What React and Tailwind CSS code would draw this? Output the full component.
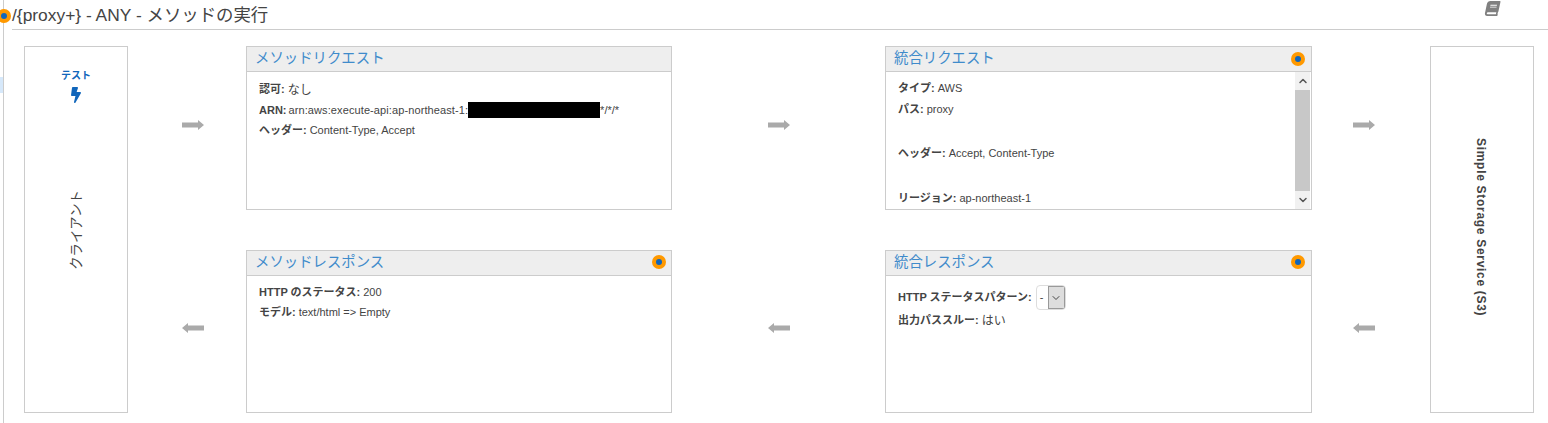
import React from 'react';
import { FaBolt, FaBook } from 'react-icons/fa';
import { ChevronDown, ChevronUp } from 'lucide-react';

const Dot = ({ className = '' }) => (
  <span className={`flex h-[14px] w-[14px] items-center justify-center rounded-full bg-[#f90] ${className}`}>
    <span className="h-[6px] w-[6px] rounded-full bg-[#1166bb]" />
  </span>
);

const Arrow = ({ left, className = '' }) => (
  <div className={`flex items-center justify-center ${className}`}>
    <svg width="22" height="10" viewBox="0 0 22 10" className={left ? 'rotate-180' : ''}>
      <path d="M0 2.5h16V0l6 5-6 5V7.5H0z" fill="#aaaaaa" />
    </svg>
  </div>
);

const Card = ({ title, dot, dotClass = '', children }) => (
  <div className="flex min-h-0 flex-col border border-[#ccc] bg-white">
    <div className="flex h-[25px] shrink-0 items-center justify-between border-b border-[#ccc] bg-[#eee] pl-[8px] pr-[6px]">
      <span className="text-[14.4px] text-[#3f8bcb]">{title}</span>
      {dot && <Dot className={dotClass} />}
    </div>
    {children}
  </div>
);

const Row = ({ label, children, className = 'mb-[7.5px]' }) => (
  <div className={`flex h-[13px] items-center whitespace-nowrap text-[#444] ${className}`}>
    <b className="mr-[3px] font-bold">{label}</b>
    {children}
  </div>
);

const App = () => {
  return (
    <div className="relative h-[423px] w-[1548px] overflow-hidden bg-white font-['Liberation_Sans','Noto_Sans_CJK_JP',sans-serif] text-[11px]">
      {/* left rail */}
      <div className="absolute left-0 top-0 h-full w-[4px] border-r border-[#ccc]">
        <div className="mt-[77px] h-[16px] w-[3px] bg-[#d6e8fa]" />
      </div>
      <Dot className="absolute left-[-3px] top-[9px]" />

      <div className="ml-[12px] flex h-[30px] items-center justify-between border-b border-[#ccc] pt-[2px]">
        <h1 className="text-[17.4px] leading-none text-[#444]">/&#123;proxy+&#125; - ANY - メソッドの実行</h1>
        <FaBook className="mb-[14px] mr-[47px] h-[15px] w-[17px] -skew-x-12 text-[#808080]" />
      </div>

      <div className="ml-[24px] mt-[16px] grid grid-cols-[104px_118px_426px_213px_427px_118px_104px] grid-rows-[164px_40px_163px]">
        <div className="row-span-3 flex flex-col items-center border border-[#ccc] pt-[22px]">
          <span className="text-[10px] font-bold leading-[14px] text-[#1166bb]">テスト</span>
          <FaBolt className="mt-[2px] h-[20px] w-[10px] text-[#1166bb]" />
          <span className="ml-[2px] mt-[85px] rotate-180 text-[13.4px] leading-none text-[#444] [text-orientation:sideways] [writing-mode:vertical-rl]">クライアント</span>
        </div>

        <Arrow className="pb-[6px] pl-[12px]" />

        <Card title="メソッドリクエスト">
          <div className="pl-[12px] pt-[11px]">
            <Row label="認可:"><span className="text-[12px]">なし</span></Row>
            <Row label="ARN:">
              <span className="-ml-[1px] tracking-[0.1px]">arn:aws:execute-api:ap-northeast-1:</span>
              <span className="relative z-10 h-[16px] w-[132px] bg-black" />
              <span>*/*/*</span>
            </Row>
            <Row label="ヘッダー:">Content-Type, Accept</Row>
          </div>
        </Card>

        <Arrow className="pb-[6px]" />

        <Card title="統合リクエスト" dot>
          <div className="flex min-h-0 flex-1">
            <div className="flex-1 overflow-hidden pl-[12px] pt-[10px]">
              <Row label="タイプ:">AWS</Row>
              <Row label="パス:" className="mb-[31px]">proxy</Row>
              <Row label="ヘッダー:" className="mb-[32px]">Accept, Content-Type</Row>
              <Row label="リージョン:">ap-northeast-1</Row>
            </div>
            <div className="mr-[1px] flex w-[15px] flex-col items-center bg-[#f1f1f1]">
              <ChevronUp className="h-[18px] w-[12px] text-[#555]" strokeWidth={3} />
              <div className="h-[101px] w-full bg-[#c8c8c8]" />
              <ChevronDown className="mt-auto h-[18px] w-[12px] text-[#555]" strokeWidth={3} />
            </div>
          </div>
        </Card>

        <Arrow className="pb-[6px] pr-[14px]" />

        <div className="row-span-3 flex justify-center border border-[#ccc] pr-[3px] pt-[91px]">
          <span className="text-[12px] font-bold leading-none tracking-[0.7px] text-[#444] [writing-mode:vertical-rl]">Simple Storage Service (S3)</span>
        </div>

        <div className="col-start-2 row-start-3 grid"><Arrow left className="pb-[7px] pl-[12px]" /></div>

        <div className="col-start-3 row-start-3 grid">
          <Card title="メソッドレスポンス" dot dotClass="-mt-[2px] mr-[-1px]">
            <div className="pl-[12px] pt-[10px]">
              <Row label="HTTP のステータス:" className="mb-[7px]">200</Row>
              <Row label="モデル:">text/html =&gt; Empty</Row>
            </div>
          </Card>
        </div>

        <div className="col-start-4 row-start-3 grid"><Arrow left className="pb-[7px]" /></div>

        <div className="col-start-5 row-start-3 grid">
          <Card title="統合レスポンス" dot dotClass="-mt-[2px]">
            <div className="pl-[12px] pt-[9px]">
              <div className="mb-[4px] flex items-center whitespace-nowrap text-[#444]">
                <b className="mr-[4px] font-bold">HTTP ステータスパターン:</b>
                <span className="flex h-[25px] w-[30px] overflow-hidden rounded-[4px] border border-[#ddd]">
                  <span className="flex-1 pl-[3px] leading-[23px]">-</span>
                  <span className="flex w-[17px] items-center justify-center border border-[#999] bg-[#ddd]">
                    <ChevronDown className="h-[12px] w-[12px] text-[#444]" />
                  </span>
                </span>
              </div>
              <Row label="出力パススルー:"><span className="text-[12px]">はい</span></Row>
            </div>
          </Card>
        </div>

        <div className="col-start-6 row-start-3 grid"><Arrow left className="pb-[7px] pr-[14px]" /></div>
      </div>
    </div>
  );
};

export default App;
